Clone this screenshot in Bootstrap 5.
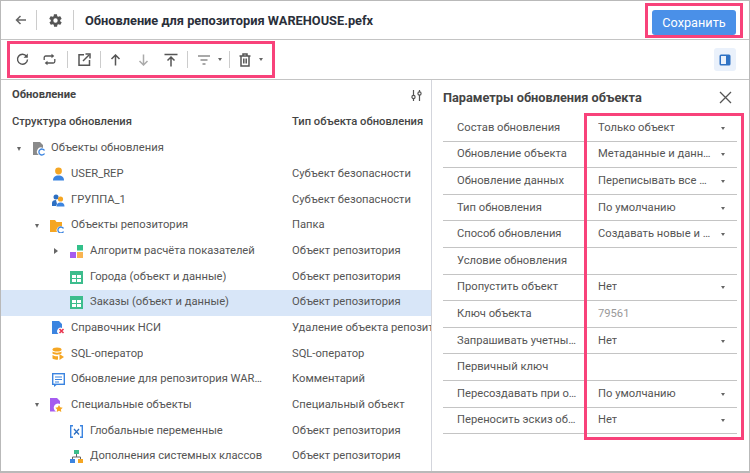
<!DOCTYPE html>
<html lang="ru"><head><meta charset="utf-8"><title>Обновление</title>
<link href="https://cdn.jsdelivr.net/npm/bootstrap@5.3.0/dist/css/bootstrap.min.css" rel="stylesheet">
<style>
html,body{margin:0;height:473px;overflow:hidden;background:#fff}
body{font-family:Roboto,"Liberation Sans",sans-serif;font-size:11.2px;color:#555}
.frame{width:750px;height:473px;border:1px solid #b9b9b9;border-width:1px 1px 2px 1px;position:relative;display:flex;flex-direction:column}
.topbar{height:39px;border-bottom:1px solid #c4c4c4;padding:0 6px 0 13px;flex:none}
.vsep{width:1px;background:#ccc;align-self:center}
.topbar .vsep{height:20px}
.doc-title{font-size:12.8px;font-weight:700;color:#2a2f3a;margin:1px 0 0 11px}
.save-ring{border:3px solid #f8427a;padding:4px;height:35px;width:98px;display:flex}
.save-btn{width:100%;padding:0;background:#4a90e8;border:0;border-radius:3px;color:#fff;font-size:12.7px;line-height:25px;height:25px}
.toolbar{height:40px;border-bottom:1px solid #c4c4c4;padding:0 13px 0 6px;flex:none}
.tool-ring{border:3px solid #f8427a;height:37px;width:268px;display:flex;align-items:center}
.tool-ring .vsep{height:17px}
.ic{display:block;flex:none}
.side-btn{width:22px;height:23px;background:#eaf1fb;border-radius:3px}
.panes{flex:1;min-height:0;display:flex}
.left-pane{width:430px;flex:none;overflow:hidden}
.pane-head{height:29px;padding:1px 9px 0 11px;font-weight:700;color:#444}
.col-head{height:27px;font-weight:500;color:#444;display:grid;grid-template-columns:280px 1fr;padding-left:11px;align-items:center;white-space:nowrap;overflow:hidden}
.tree-row{height:25.67px;display:grid;grid-template-columns:291px 1fr;align-items:center;white-space:nowrap;overflow:hidden}
.tree-row.on{background:#d8e6f8}
.tree-cell{display:flex;align-items:center;min-width:0;overflow:hidden;padding-right:24px}
.tree-cell.tight-end{padding-right:30px}
.tree-text{margin-left:6px;overflow:hidden;text-overflow:ellipsis}
.lv0 .tree-text{margin-left:5px}
.lv1x .tree-text{margin-left:7px}
.lv1x .tree-text.wide-gap{margin-left:8px}
.lv2 .tree-text,.lv2x .tree-text{margin-left:7px}
.caret{width:0;height:0;flex:none;border-left:2.5px solid transparent;border-right:2.5px solid transparent;border-top:4px solid #666}
.caret.side{border:0;border-top:3px solid transparent;border-bottom:3px solid transparent;border-left:4px solid #666}
.lv0{padding-left:16px}.lv1{padding-left:51px}.lv1x{padding-left:34px}.lv2{padding-left:69px}.lv2x{padding-left:53px}
.right-pane{flex:1;border-left:1px solid #d3d5dc;position:relative;padding:0 12px 0 11px}
.grip{position:absolute;left:1px;top:208px;width:3px;height:8px;background-image:radial-gradient(#bbb 40%,transparent 45%);background-size:2px 2px}
.props-title{height:35px;font-size:12.75px;font-weight:700;color:#444}
.prop{height:26.6px;padding-top:1px;border-bottom:1px solid #c4c4c4;display:grid;grid-template-columns:155px 1fr;align-items:center;white-space:nowrap}
.prop>span:first-child{padding-left:14px;width:145px;overflow:hidden;text-overflow:ellipsis}
.val{display:flex;justify-content:space-between;align-items:center;padding-right:12px;min-width:0}
.val span{overflow:hidden;text-overflow:ellipsis}
.val .caret{border-top-width:3.5px}
.muted-val{color:#999}
.props-ring{position:absolute;left:152px;top:33px;width:160px;height:327px;border:3px solid #f8427a;pointer-events:none}
</style></head><body>
<div class="frame">
 <div class="topbar d-flex align-items-center">
  <svg class="ic" width="14" height="14" viewBox="0 0 14 14" fill="none" stroke="#666" stroke-width="1.5"><path d="M12 7H2.5M6.500 3 2.500 7l4 4"/></svg>
  <div class="vsep ms-2"></div>
  <svg class="ic" style="margin-left:11px" width="15" height="15" viewBox="0 0 24 24" fill="#555"><path d="M19.4 13c.1-.3.1-.7.1-1s0-.7-.1-1l2.100-1.600c.2-.2.2-.4.100-.6l-2-3.500c-.1-.2-.4-.3-.6-.2l-2.500 1c-.5-.4-1.100-.7-1.700-1l-.4-2.600c0-.3-.2-.5-.5-.5h-4c-.3 0-.5.2-.5.4l-.4 2.700c-.6.2-1.200.6-1.700 1l-2.500-1c-.2-.1-.5 0-.6.2l-2 3.500c-.1.2-.1.5.1.6L4.600 11c0 .3-.1.7-.1 1s0 .7.1 1l-2.100 1.600c-.2.2-.2.4-.1.6l2 3.500c.1.2.4.3.6.2l2.500-1c.5.4 1.100.7 1.700 1l.4 2.600c0 .3.2.5.5.5h4c.3 0 .5-.2.5-.4l.4-2.700c.6-.2 1.200-.6 1.700-1l2.500 1c.2.1.5 0 .6-.2l2-3.500c.1-.2.1-.5-.1-.6L19.400 13zM12 15.500a3.500 3.500 0 1 1 0-7 3.500 3.500 0 0 1 0 7z"/></svg>
  <div class="vsep" style="margin-left:10px"></div>
  <div class="doc-title">Обновление для репозитория WAREHOUSE.pefx</div>
  <div class="save-ring ms-auto"><button class="save-btn btn" type="button">Сохранить</button></div>
 </div>
 <div class="toolbar d-flex align-items-center justify-content-between">
  <div class="tool-ring">
   <svg class="ic" style="margin-left:6px" width="13" height="13" viewBox="0 0 13 13" fill="none" stroke="#555" stroke-width="1.400"><path d="M10.600 3.400A5 5 0 1 0 11.500 6.500"/><path d="M11.800 .6v4.200H7.600z" fill="#555" stroke="none"/></svg>
   <svg class="ic" style="margin-left:14px" width="13" height="13" viewBox="0 0 13 13" fill="none" stroke="#555" stroke-width="1.300"><path d="M1.200 7V4.500a1.500 1.500 0 0 1 1.500-1.500H9M11.800 6v2.500a1.500 1.500 0 0 1-1.500 1.500H4"/><path d="M8.500 .7 11.300 3 8.500 5.300zM4.500 7.700 1.700 10l2.800 2.300z" fill="#555" stroke="none"/></svg>
   <div class="vsep" style="margin-left:11px"></div>
   <svg class="ic" style="margin-left:10px" width="13" height="13" viewBox="0 0 13 13" fill="none" stroke="#555" stroke-width="1.500"><path d="M6 1.700H1v10.500h10.500V7"/><path d="M5 8 11 2"/><path d="M7.500 1h4.500v4.500"/></svg>
   <div class="vsep" style="margin-left:9px"></div>
   <svg class="ic" style="margin-left:9px" width="11" height="12" viewBox="0 0 11 12" fill="none" stroke="#555" stroke-width="1.500"><path d="M5.500 11.500V1M1.500 5l4-4 4 4"/></svg>
   <svg class="ic" style="margin-left:17px" width="11" height="12" viewBox="0 0 11 12" fill="none" stroke="#aaa" stroke-width="1.500"><path d="M5.500 .5V11M1.500 7l4 4 4-4"/></svg>
   <svg class="ic" style="margin-left:15px" width="14" height="14" viewBox="0 0 14 14" fill="none" stroke="#555" stroke-width="1.500"><path d="M.5 1.500h13M7 13.500V4M3.500 7.500 7 4l3.500 3.500"/></svg>
   <div class="vsep" style="margin-left:9px"></div>
   <svg class="ic" style="margin-left:10px" width="12" height="10" viewBox="0 0 12 10" fill="none" stroke="#555" stroke-width="1.200"><path d="M0 1h12M2.500 5h7M4.500 9h3"/></svg>
   <span class="caret" style="margin-left:8px;border-top-width:3px"></span>
   <div class="vsep" style="margin-left:7px"></div>
   <svg class="ic" style="margin-left:9px" width="12" height="14" viewBox="0 0 12 14" fill="none" stroke="#555" stroke-width="1.500"><path d="M.5 3h11M4 3V1h4v2M2 3v10h8V3M4.800 5.500v5M7.200 5.500v5"/></svg>
   <span class="caret" style="margin-left:8px;border-top-width:3px"></span>
  </div>
  <div class="side-btn d-flex align-items-center justify-content-center">
   <svg class="ic" width="12" height="12" viewBox="0 0 12 12"><rect x=".5" y=".5" width="11" height="11" rx="1.500" fill="#2f72c4"/><rect x="2" y="2" width="5" height="8" fill="#eaf1fb"/></svg>
  </div>
 </div>
 <div class="panes">
  <div class="left-pane">
   <div class="pane-head d-flex justify-content-between align-items-center">
    <span>Обновление</span>
    <svg class="ic" width="11" height="13" viewBox="0 0 11 13" fill="none" stroke="#555" stroke-width="1.200"><path d="M2.500 1v11M8.500 1v11"/><circle cx="2.500" cy="8" r="1.600" fill="#fff"/><circle cx="8.500" cy="4.500" r="1.600" fill="#fff"/></svg>
   </div>
   <div class="col-head"><span>Структура обновления</span><span>Тип объекта обновления</span></div>

   <div class="tree-row"><div class="tree-cell lv0"><span class="caret"></span>
    <svg class="ic" style="margin-left:11px" width="14" height="15" viewBox="0 0 14 15"><path d="M1 1h7l3 3v3a4 4 0 0 0-4 7H1z" fill="#8a8a8a"/><path d="M12.500 9.500a3 3 0 1 0 0 3" fill="none" stroke="#3b84e0" stroke-width="1.300"/></svg>
    <span class="tree-text">Объекты обновления</span></div><span></span></div>

   <div class="tree-row"><div class="tree-cell lv1"><svg class="ic" width="13" height="14" viewBox="0 0 13 14"><circle cx="6.500" cy="4" r="3.400" fill="#f5a623"/><path d="M1 13.500c0-3.500 2-5 5.500-5s5.500 1.500 5.500 5z" fill="#3b84e0"/></svg>
    <span class="tree-text">USER_REP</span></div><span>Субъект безопасности</span></div>

   <div class="tree-row"><div class="tree-cell lv1"><svg class="ic" width="13" height="13" viewBox="0 0 13 13"><circle cx="4" cy="3" r="2.500" fill="#2d6fc2"/><path d="M0 9c0-2 1.500-3 4-3l1 4-1 2H0z" fill="#2d6fc2"/><circle cx="8.500" cy="5" r="2.600" fill="#f5a623"/><path d="M4.500 12.500c0-2.500 1.500-4 4-4s4 1.500 4 4z" fill="#3b84e0"/></svg>
    <span class="tree-text">ГРУППА_1</span></div><span>Субъект безопасности</span></div>

   <div class="tree-row"><div class="tree-cell lv1x"><span class="caret"></span>
    <svg class="ic" style="margin-left:11px" width="14" height="14" viewBox="0 0 14 14"><path d="M0 1h5l1.500 2H12v4.500A4 4 0 0 0 7 13H0z" fill="#f5a623"/><path d="M13.500 9.500a3 3 0 1 0 0 3" fill="none" stroke="#3b84e0" stroke-width="1.300"/></svg>
    <span class="tree-text">Объекты репозитория</span></div><span>Папка</span></div>

   <div class="tree-row"><div class="tree-cell lv2x"><span class="caret side"></span>
    <svg class="ic" style="margin-left:12px" width="13" height="13" viewBox="0 0 13 13"><rect x="7" y="0" width="6" height="5.500" fill="#32c08a"/><rect x="0" y="7" width="6" height="6" fill="#a55cf0"/><rect x="7" y="7" width="6" height="6" fill="#f9b451"/></svg>
    <span class="tree-text">Алгоритм расчёта показателей</span></div><span>Объект репозитория</span></div>

   <div class="tree-row"><div class="tree-cell lv2"><svg class="ic" width="13" height="13" viewBox="0 0 13 13"><rect width="13" height="13" fill="#3dbd8d"/><path d="M2 4h4v3H2zM7 4h4v3H7zM2 8h4v3H2zM7 8h4v3H7z" fill="#fff"/></svg>
    <span class="tree-text">Города (объект и данные)</span></div><span>Объект репозитория</span></div>

   <div class="tree-row on"><div class="tree-cell lv2"><svg class="ic" width="13" height="13" viewBox="0 0 13 13"><rect width="13" height="13" fill="#3dbd8d"/><path d="M2 4h4v3H2zM7 4h4v3H7zM2 8h4v3H2zM7 8h4v3H7z" fill="#fff"/></svg>
    <span class="tree-text">Заказы (объект и данные)</span></div><span>Объект репозитория</span></div>

   <div class="tree-row"><div class="tree-cell lv1"><svg class="ic" width="13" height="14" viewBox="0 0 13 14"><path d="M0 0h7l3 3v4a3.500 3.500 0 0 0-3.500 6H0z" fill="#3b84e0"/><path d="M7.500 8l4 4M11.500 8l-4 4" stroke="#e8344e" stroke-width="1.600"/></svg>
    <span class="tree-text">Справочник НСИ</span></div><span>Удаление объекта репозитория</span></div>

   <div class="tree-row"><div class="tree-cell lv1"><svg class="ic" width="13" height="14" viewBox="0 0 13 14"><ellipse cx="5" cy="2.500" rx="4.500" ry="2" fill="#f5a623"/><path d="M.5 4.500c1.500 1.500 7.500 1.500 9 0v2c-1.500 1.500-7.500 1.500-9 0zM.5 8c1.500 1.300 4 1.500 5.500 1.200v3.300c-2 .5-4.500 0-5.500-1z" fill="#f5a623"/><path d="M7.500 7l4.500 3-4.500 3z" fill="#f5a623"/></svg>
    <span class="tree-text">SQL-оператор</span></div><span>SQL-оператор</span></div>

   <div class="tree-row"><div class="tree-cell lv1 tight-end"><svg class="ic" width="13" height="14" viewBox="0 0 13 14"><rect x=".7" y=".7" width="11.600" height="10.600" fill="#fff" stroke="#3b84e0" stroke-width="1.400"/><path d="M3 4h7M3 6.500h7M3 9h4" stroke="#3b84e0" stroke-width="1.100"/><path d="M2 12h2.500L2 14z" fill="#3b84e0"/></svg>
    <span class="tree-text">Обновление для репозитория WAREHOUSE.pefx</span></div><span>Комментарий</span></div>

   <div class="tree-row"><div class="tree-cell lv1x"><span class="caret"></span>
    <svg class="ic" style="margin-left:11px" width="13" height="14" viewBox="0 0 13 14"><path d="M0 0h7l3 3v3a4 4 0 0 0-4 7.500H0z" fill="#a55cf0"/><path d="M9 7l1.200 2.300 2.500.4-1.800 1.700.4 2.500L9 12.700l-2.300 1.200.4-2.500-1.800-1.700 2.500-.4z" fill="#f5a623"/></svg>
    <span class="tree-text wide-gap">Специальные объекты</span></div><span>Специальный объект</span></div>

   <div class="tree-row"><div class="tree-cell lv2"><svg class="ic" width="13" height="13" viewBox="0 0 13 13" fill="none"><path d="M3 .7H.7v11.600H3M10 .7h2.300v11.600H10" stroke="#3b84e0" stroke-width="1.400"/><path d="M4 4l5 5.500M9 4l-5 5.500" stroke="#2d6fc2" stroke-width="1.300"/></svg>
    <span class="tree-text">Глобальные переменные</span></div><span>Объект репозитория</span></div>

   <div class="tree-row"><div class="tree-cell lv2"><svg class="ic" width="13" height="13" viewBox="0 0 13 13"><rect x="4" y="0" width="5" height="4" fill="#3dbd8d"/><path d="M6.500 4v3M2.500 9V7h8v2" stroke="#666" fill="none"/><rect x="0" y="9" width="5" height="4" fill="#3b84e0"/><rect x="8" y="9" width="5" height="4" fill="#f5a623"/></svg>
    <span class="tree-text">Дополнения системных классов</span></div><span>Объект репозитория</span></div>
  </div>
  <div class="right-pane">
   <div class="grip"></div>
   <div class="props-title d-flex justify-content-between align-items-center">
    <span>Параметры обновления объекта</span>
    <svg class="ic" width="13" height="13" viewBox="0 0 13 13" fill="none" stroke="#555" stroke-width="1.300" style="margin-right:5px"><path d="M1 1l11 11M12 1 1 12"/></svg>
   </div>
   <div class="prop"><span>Состав обновления</span><div class="val"><span>Только объект</span><i class="caret"></i></div></div>
   <div class="prop"><span>Обновление объекта</span><div class="val"><span>Метаданные и данн…</span><i class="caret"></i></div></div>
   <div class="prop"><span>Обновление данных</span><div class="val"><span>Переписывать все …</span><i class="caret"></i></div></div>
   <div class="prop"><span>Тип обновления</span><div class="val"><span>По умолчанию</span><i class="caret"></i></div></div>
   <div class="prop"><span>Способ обновления</span><div class="val"><span>Создавать новые и …</span><i class="caret"></i></div></div>
   <div class="prop"><span>Условие обновления</span><div class="val"></div></div>
   <div class="prop"><span>Пропустить объект</span><div class="val"><span>Нет</span><i class="caret"></i></div></div>
   <div class="prop"><span>Ключ объекта</span><div class="val"><span class="muted-val">79561</span></div></div>
   <div class="prop"><span>Запрашивать учетны…</span><div class="val"><span>Нет</span><i class="caret"></i></div></div>
   <div class="prop"><span>Первичный ключ</span><div class="val"></div></div>
   <div class="prop"><span>Пересоздавать при о…</span><div class="val"><span>По умолчанию</span><i class="caret"></i></div></div>
   <div class="prop"><span>Переносить эскиз об…</span><div class="val"><span>Нет</span><i class="caret"></i></div></div>
   <div class="props-ring"></div>
  </div>
 </div>
</div>
<script src="https://cdn.jsdelivr.net/npm/bootstrap@5.3.0/dist/js/bootstrap.bundle.min.js"></script>
</body></html>
